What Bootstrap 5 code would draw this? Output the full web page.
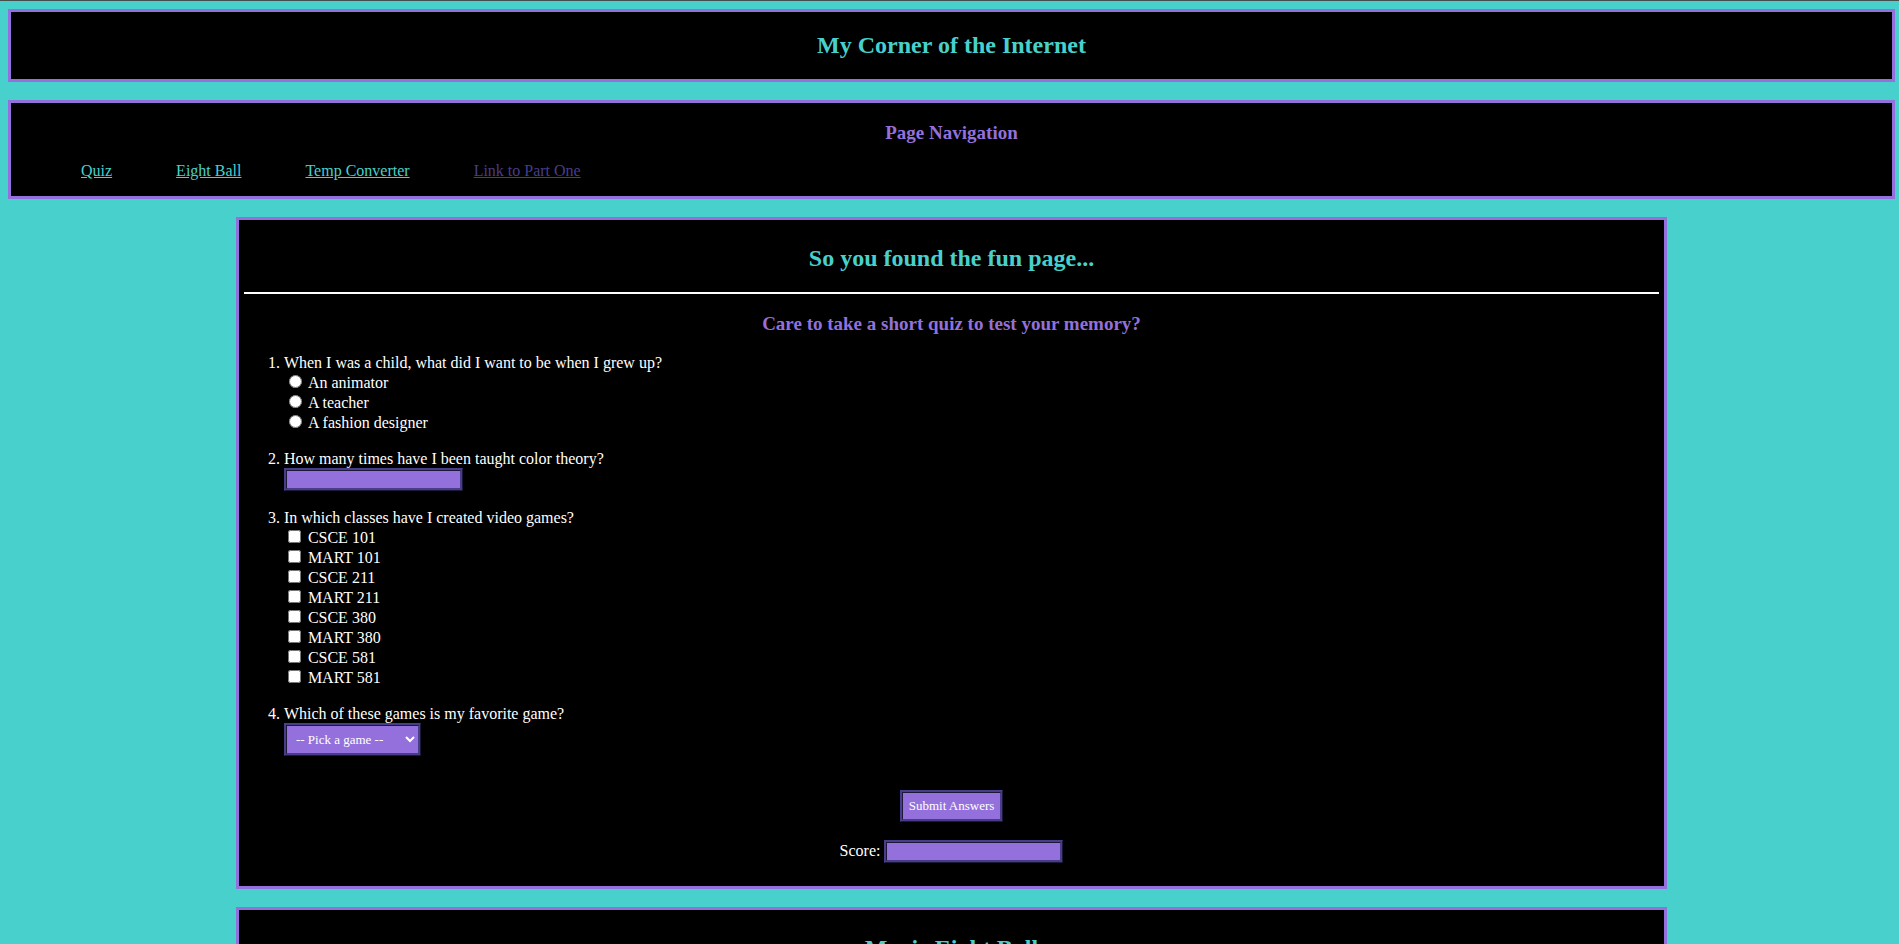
<!DOCTYPE html>
<html lang="en">
<head>
<meta charset="utf-8">
<meta name="viewport" content="width=device-width, initial-scale=1">
<title>My Corner of the Internet</title>
<link href="https://cdn.jsdelivr.net/npm/bootstrap@5.3.0/dist/css/bootstrap.min.css" rel="stylesheet">
<style>
  body {
    background: #48d1cc;
    color: #fff;
    font-family: "Liberation Serif", "Times New Roman", serif;
    font-size: 16px;
    line-height: 18px;
    border-top: 1px solid #464d4d;
    padding: 8px 4px 18px 8px;
  }
  .panel { background: #000; border: 3px solid #9370db; }
  .stack { gap: 18px; }
  .section-panel { box-sizing: content-box; padding: 5px; }
  h1, h2 { font-size: 24px; line-height: 27px; font-weight: 700; color: #48d1cc; margin: 20px 0; }
  h3 { font-size: 19px; line-height: 21px; font-weight: 700; color: #9370db; margin: 19px 0; }
  .page-links { gap: 64px; margin: 0 0 16px; padding: 0 70px; }
  .page-links a { color: #48d1cc; }
  .page-links a.visited-link { color: #483d8b; }
  .rule { border: 0; border-top: 2px solid #fff; opacity: 1; margin: 0; }
  .questions { padding-left: 40px; margin: 20px 0 34px; }
  .questions > li + li { margin-top: 18px; }
  .question { display: block; margin: 0; }
  .choice { height: 20px; }
  .choice label { line-height: 22px; padding-left: 4px; }
  .choice input[type=radio] { margin: 3px 2px 4px 5px; width: 13px; height: 13px; }
  .choice input[type=checkbox] { margin: 3px 3px 4px 4px; width: 13px; height: 13px; }
  .field { background: #9370db; color: #fff; border: 3px ridge #483d8b; border-radius: 0; font-size: 13px; }
  input.field { width: 179px; height: 23px; padding: 1px 2px; display: block; }
  select.field { width: 137px; height: 33px; padding: 5px; display: block; }
  button.field { height: 32px; padding: 4px 6px 6px; line-height: 15px; }
  .score-row { margin: 18px 0; gap: 4px; }
  .score-row label { line-height: 22px; }
</style>
</head>
<body>
<div class="d-flex flex-column stack">
  <header class="panel text-center"><h1>My Corner of the Internet</h1></header>

  <nav class="panel" aria-label="Page">
    <h3 class="text-center">Page Navigation</h3>
    <ul class="page-links list-unstyled d-flex flex-wrap">
      <li><a href="#quiz">Quiz</a></li>
      <li><a href="#eight-ball">Eight Ball</a></li>
      <li><a href="#temp-converter">Temp Converter</a></li>
      <li><a class="visited-link" href="#part-one">Link to Part One</a></li>
    </ul>
  </nav>

  <main class="d-flex flex-column align-items-center stack">
    <section id="quiz" class="panel section-panel w-75">
      <h2 class="text-center">So you found the fun page...</h2>
      <hr class="rule">
      <h3 class="text-center">Care to take a short quiz to test your memory?</h3>
      <form>
        <ol class="questions">
          <li>
            <div role="radiogroup" aria-labelledby="q1">
              <p class="question" id="q1">When I was a child, what did I want to be when I grew up?</p>
              <div class="choice d-flex"><input type="radio" name="job" id="job1"><label for="job1">An animator</label></div>
              <div class="choice d-flex"><input type="radio" name="job" id="job2"><label for="job2">A teacher</label></div>
              <div class="choice d-flex"><input type="radio" name="job" id="job3"><label for="job3">A fashion designer</label></div>
            </div>
          </li>
          <li>
            <label class="question" for="theory">How many times have I been taught color theory?</label>
            <input class="field" type="text" id="theory">
          </li>
          <li>
            <div role="group" aria-labelledby="q3">
              <p class="question" id="q3">In which classes have I created video games?</p>
              <div class="choice d-flex"><input type="checkbox" id="c101"><label for="c101">CSCE 101</label></div>
              <div class="choice d-flex"><input type="checkbox" id="m101"><label for="m101">MART 101</label></div>
              <div class="choice d-flex"><input type="checkbox" id="c211"><label for="c211">CSCE 211</label></div>
              <div class="choice d-flex"><input type="checkbox" id="m211"><label for="m211">MART 211</label></div>
              <div class="choice d-flex"><input type="checkbox" id="c380"><label for="c380">CSCE 380</label></div>
              <div class="choice d-flex"><input type="checkbox" id="m380"><label for="m380">MART 380</label></div>
              <div class="choice d-flex"><input type="checkbox" id="c581"><label for="c581">CSCE 581</label></div>
              <div class="choice d-flex"><input type="checkbox" id="m581"><label for="m581">MART 581</label></div>
            </div>
          </li>
          <li>
            <label class="question" for="game">Which of these games is my favorite game?</label>
            <select class="field" id="game"><option>-- Pick a game --</option></select>
          </li>
        </ol>
        <div class="d-flex justify-content-center"><button type="button" class="field">Submit Answers</button></div>
        <div class="score-row d-flex justify-content-center align-items-start">
          <label for="score">Score:</label>
          <input class="field" type="text" id="score" readonly>
        </div>
      </form>
    </section>

    <section id="eight-ball" class="panel section-panel w-75">
      <h2 class="text-center">Magic Eight Ball</h2>
      <hr class="rule">
    </section>
  </main>
</div>
<script src="https://cdn.jsdelivr.net/npm/bootstrap@5.3.0/dist/js/bootstrap.bundle.min.js"></script>
</body>
</html>
